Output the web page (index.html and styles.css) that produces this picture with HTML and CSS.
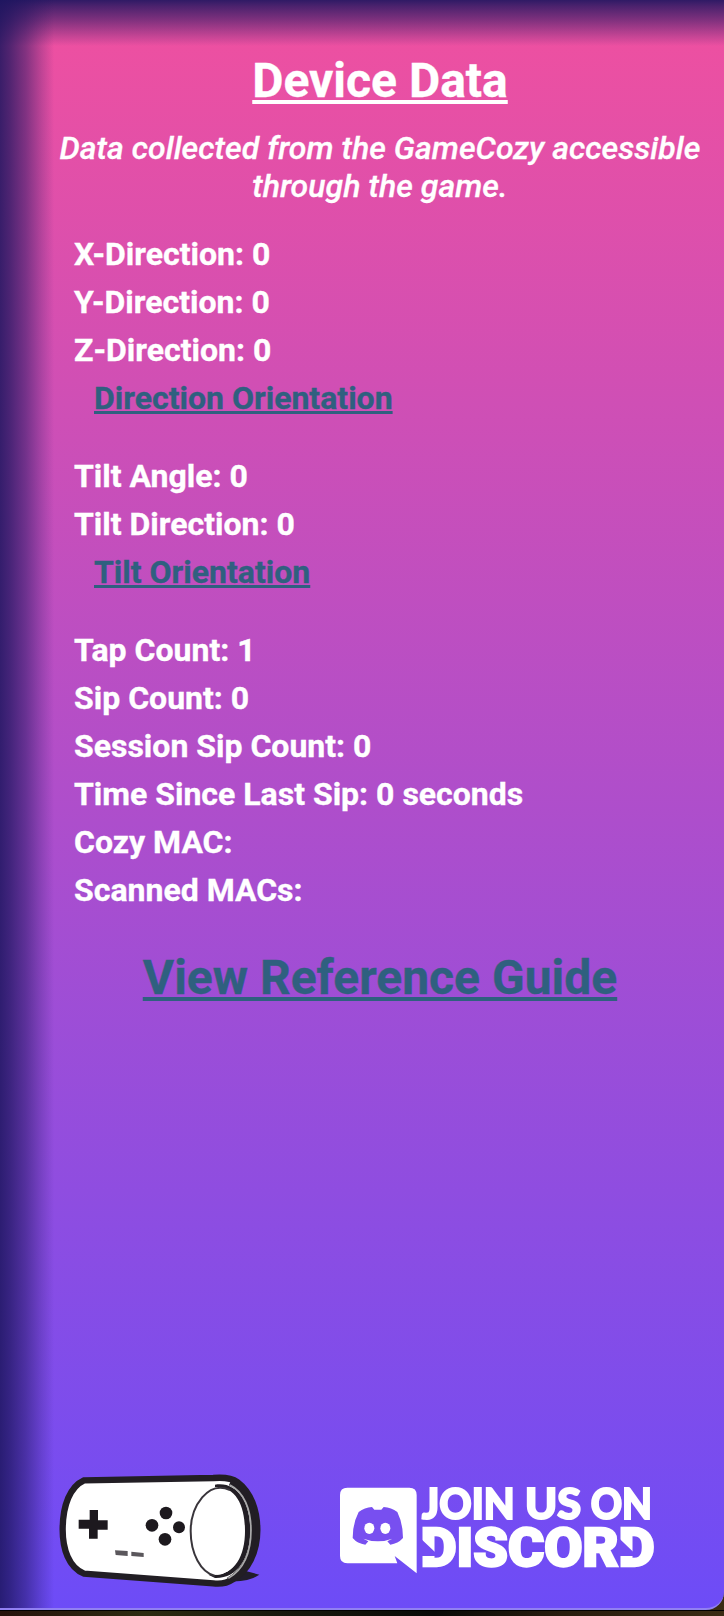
FILE: index.html
```html
<!DOCTYPE html>
<html lang="en">
<head>
<meta charset="utf-8">
<title>Device Data</title>
<link rel="stylesheet" href="styles.css">
</head>
<body>
<main class="panel">
  <h1 class="title">Device Data</h1>
  <p class="intro">Data collected from the GameCozy accessible through the game.</p>
  <section class="group">
    <div>X-Direction: 0</div>
    <div>Y-Direction: 0</div>
    <div>Z-Direction: 0</div>
    <a class="link" href="#">Direction Orientation</a>
  </section>
  <section class="group">
    <div>Tilt Angle: 0</div>
    <div>Tilt Direction: 0</div>
    <a class="link" href="#">Tilt Orientation</a>
  </section>
  <section class="group">
    <div>Tap Count: 1</div>
    <div>Sip Count: 0</div>
    <div>Session Sip Count: 0</div>
    <div>Time Since Last Sip: 0 seconds</div>
    <div>Cozy MAC:</div>
    <div>Scanned MACs:</div>
  </section>
  <a class="guide" href="#">View Reference Guide</a>
  <footer class="footer">
    <svg class="cozy" viewBox="168 42 624 360" aria-label="GameCozy">
      <path d="M640 372L740 346L778 356Q745 378 690 376Z" fill="#211d2b"/>
      <path d="M252 73L640 66Q690 62 712 78C752 108 772 162 772 222C772 286 745 345 698 370Q675 386 640 382L252 353C207 335 187 280 188 216C189 148 210 92 252 73Z" fill="#fff" stroke="#221e24" stroke-width="19"/>
      <path d="M645 86C712 76 751 138 751 222C751 306 712 368 645 366L625 356C700 366 735 305 735 225C735 145 705 90 645 93Z" fill="#221e24"/>
      <path d="M690 80C738 100 760 160 760 222C760 292 732 348 685 372" fill="none" stroke="#221e24" stroke-width="16"/>
      <path d="M690 87C732 108 753 160 753 222C753 292 728 342 685 367" fill="none" stroke="#aaa" stroke-width="5"/>
      <ellipse cx="653" cy="225" rx="80" ry="131" fill="#fff"/>
      <path d="M690 102C625 72 572 150 572 225C572 292 602 349 644 359" fill="none" stroke="#39353b" stroke-width="6"/>
      <path d="M269 162h25v31h29v28h-30v27h-26v-30h-31v-27h33z" fill="#1d191e"/>
      <g fill="#1d191e"><circle cx="498" cy="171" r="19"/><circle cx="456" cy="208" r="19"/><circle cx="537" cy="214" r="18"/><circle cx="495" cy="250" r="19"/></g>
      <path d="M345 283l38 2v15l-36-3zM394 287l37 4v12l-37-3z" fill="#5b575c"/>
    </svg>
    <svg class="discord" viewBox="42 42 972 288" aria-label="Join us on Discord">
      <path d="M82 65H268Q290 65 290 87V322L224 270L232 292H82Q60 292 60 270V87Q60 65 82 65Z" fill="#fff"/>
      <path d="M116 138Q134 124 156 123L163 131H184L191 123Q214 124 232 138Q249 172 249 216Q234 233 211 236L202 226L217 218Q174 234 130 218L145 226L136 236Q112 233 98 216Q98 172 116 138Z" fill="#784ff0"/>
      <ellipse cx="148" cy="187" rx="15" ry="17" fill="#fff"/><ellipse cx="196" cy="187" rx="15" ry="17" fill="#fff"/>
      <g class="join">
        <text x="306" y="159" textLength="278" lengthAdjust="spacingAndGlyphs">JOIN</text>
        <text x="615" y="159" textLength="168" lengthAdjust="spacingAndGlyphs">US</text>
        <text x="812" y="159" textLength="184" lengthAdjust="spacingAndGlyphs">ON</text>
      </g>
      <text class="brand" x="302" y="299" textLength="702" lengthAdjust="spacingAndGlyphs">DISCORD</text>
      <path d="M298 214L345 258V270H298ZM894 214L940 258V270H894Z" fill="#744df3"/>
    </svg>
  </footer>
</main>
<div class="ground"></div>
</body>
</html>
```
FILE: styles.css
```css
* { box-sizing: border-box; }
body {
  margin: 0;
  height: 1616px;
  overflow: hidden;
  background: linear-gradient(90deg, #26120b, #2c2b10 20%, #18190d 38%, #080a07 60%, #281c0d 78%, #3a2b13);
  font-family: Roboto, sans-serif;
  color: #fff;
  -webkit-text-stroke: .35px;
}
.panel {
  display: flex;
  flex-direction: column;
  height: 1610px;
  padding: 53px 20px 18px 56px;
  border-bottom: 2px solid #9180f2;
  border-bottom-right-radius: 18px;
  background:
    linear-gradient(90deg, rgba(28, 21, 95, .86) 0, rgba(28, 21, 95, .74) 10px, rgba(28, 21, 95, .5) 26px, rgba(28, 21, 95, .2) 42px, transparent 54px),
    linear-gradient(180deg, rgba(28, 21, 95, .91) 0, rgba(28, 21, 95, .78) 6px, rgba(28, 21, 95, .53) 20px, rgba(28, 21, 95, .2) 36px, transparent 46px),
    linear-gradient(180deg, #f0509f, #6d4cf7);
}
.ground { height: 6px; border-top: 1px solid #000; }
.title {
  margin: 0;
  font-size: 48px;
  line-height: 56px;
  text-align: center;
  text-decoration: underline;
  text-decoration-thickness: 4px;
  text-underline-offset: 3px;
}
.intro {
  margin: 20px -4px 0;
  font-size: 32px;
  line-height: 38px;
  letter-spacing: .06px;
  font-style: italic;
  font-weight: 500;
  text-align: center;
}
.group {
  margin: 25px 0 5px;
  padding-left: 18px;
  font-size: 32px;
  line-height: 48px;
  font-weight: 700;
}
.link {
  display: block;
  width: max-content;
  margin-left: 20px;
  color: #2f607f;
  text-decoration-thickness: 3px;
  text-underline-offset: 2px;
}
.guide {
  align-self: center;
  margin-top: 31px;
  font-size: 48px;
  line-height: 56px;
  font-weight: 700;
  color: #2f607f;
  text-decoration-thickness: 4px;
  text-underline-offset: 3px;
}
.footer {
  display: flex;
  align-items: flex-start;
  gap: 70px;
  height: 120px;
  margin-top: auto;
}
.cozy { width: 208px; height: 120px; flex: none; filter: blur(.7px); }
.discord { width: 324px; height: 96px; margin-top: 10px; flex: none; overflow: visible; filter: blur(.7px); }
.join, .brand { fill: #fff; stroke: #fff; font-family: Lato, sans-serif; font-weight: 900; }
.join { font-size: 126px; stroke-width: 6px; }
.brand { font-family: Roboto, sans-serif; font-size: 162px; stroke-width: 7px; }
```
